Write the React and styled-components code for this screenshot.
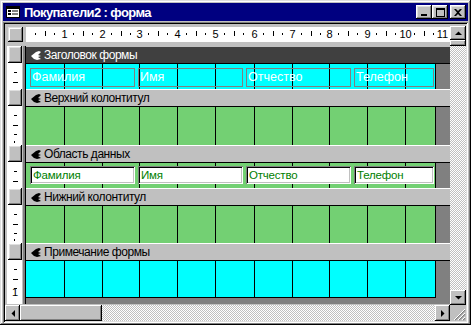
import React from 'react';
import styled, { createGlobalStyle } from 'styled-components';

const GREEN = '#73d073';
const CYAN = '#00ffff';
const GRID = [38, 76, 113, 151, 189, 228, 266, 303, 341, 379, 416];
const CM = 9.45;

const gridBg = GRID.slice(0, 10)
  .map((x) => `linear-gradient(#000, #000) ${x}px 0 / 1px 100% no-repeat`)
  .join(', ');

const Global = createGlobalStyle`
  html, body { margin: 0; padding: 0; background: #c0c0c0; }
  body { font-family: "Liberation Sans", Arial, sans-serif; }
`;

const bevelOut = 'inset -1px -1px #000, inset 1px 1px #dfdfdf, inset -2px -2px #808080, inset 2px 2px #fff';
const bevelBtn = 'inset -1px -1px #000, inset 1px 1px #fff, inset -2px -2px #808080';

const Window = styled.div`
  width: 471px;
  height: 325px;
  box-sizing: border-box;
  padding: 3px 3px 2px 3px;
  background: #c0c0c0;
  display: flex;
  flex-direction: column;
  box-shadow: ${bevelOut};
`;

const TitleBar = styled.div`
  height: 18px;
  background: #000080;
  display: flex;
  align-items: center;
  padding: 0 2px 0 3px;
`;

const TitleText = styled.span`
  margin-left: 4px;
  color: #fff;
  font-weight: bold;
  font-size: 13px;
  letter-spacing: -0.6px;
  white-space: nowrap;
`;

const TitleButtons = styled.div`
  margin-left: auto;
  display: flex;
`;

const TitleButton = styled.div`
  width: 16px;
  height: 14px;
  background: #c0c0c0;
  box-shadow: ${bevelBtn}, inset 2px 2px #dfdfdf;
  margin-left: ${(p) => p.$gap || 0}px;
  display: flex;
  align-items: center;
  justify-content: center;
`;

const Client = styled.div`
  margin-top: 1px;
  flex: 1;
  min-height: 0;
  padding: 2px;
  box-shadow: inset 1px 1px #808080, inset -1px -1px #fff, inset 2px 2px #000, inset -2px -2px #dfdfdf;
  display: grid;
  grid-template-columns: 1fr 16px;
  grid-template-rows: 1fr 16px;
`;

const Designer = styled.div`
  padding-top: 3px;
  display: grid;
  grid-template-columns: 21px 424px;
  grid-template-rows: 15px 258px;
  row-gap: 4px;
`;

const Corner = styled.div`
  margin-left: 3px;
  width: 15px;
  height: 15px;
  background: #c0c0c0;
  box-shadow: ${bevelOut};
`;

const HRuler = styled.div`
  width: 424px;
  height: 15px;
  background: #fff;
  display: flex;
`;

const VRuler = styled.div`
  margin-left: 2px;
  width: 15px;
  background: #fff;
  display: flex;
  flex-direction: column;
`;

const RulerButton = styled.div`
  height: 17px;
  margin-left: 1px;
  flex: none;
  background: #c0c0c0;
  box-shadow: ${bevelBtn}, inset 2px 2px #dfdfdf;
`;

const RulerSeg = styled.div`
  height: ${(p) => p.$h}px;
  flex: none;
  display: flex;
`;

const FormPane = styled.div`
  display: flex;
  flex-direction: column;
  box-shadow: -1px 0 0 0 #000, -3px 0 0 0 #808080;
`;

const SectionHeader = styled.div`
  height: 17px;
  box-sizing: border-box;
  border-top: 1px solid ${(p) => (p.$active ? '#c0c0c0' : '#fff')};
  background: ${(p) => (p.$active ? '#404040' : '#c0c0c0')};
  color: ${(p) => (p.$active ? '#fff' : '#000')};
  display: flex;
  align-items: center;
  padding-left: 5px;
  gap: 3px;
  font-size: 12px;
  letter-spacing: -0.45px;
  white-space: nowrap;
  flex: none;
`;

const SectionRow = styled.div`
  height: ${(p) => p.$h}px;
  display: flex;
  flex: none;
`;

const SectionBody = styled.div`
  width: 410px;
  flex: none;
  box-sizing: border-box;
  background: ${gridBg};
  background-color: ${(p) => p.$bg};
  box-shadow: inset 0 1px #000, inset -1px 0 #000${(p) => (p.$last ? ', inset 0 -1px #000' : '')};
  display: flex;
  align-items: flex-start;
  gap: 3px;
  padding: ${(p) => p.$pt || 0}px 0 0 4px;
`;

const SectionMargin = styled.div`
  flex: 1;
  background: #808080;
  box-shadow: inset 0 1px #000;
`;

const BottomStrip = styled.div`
  height: 6px;
  background: #808080;
  flex: none;
`;

const Label = styled.div`
  width: ${(p) => p.$w}px;
  height: 19px;
  box-sizing: border-box;
  border: 1px solid #808080;
  color: #fff;
  font-size: 12.5px;
  line-height: 17px;
  padding-left: 1px;
  white-space: nowrap;
  overflow: hidden;
`;

const Field = styled.div`
  width: ${(p) => p.$w}px;
  height: 18px;
  box-sizing: border-box;
  background: #fff;
  color: #008000;
  font-size: 11.5px;
  letter-spacing: -0.2px;
  line-height: 18px;
  padding-left: 3px;
  white-space: nowrap;
  overflow: hidden;
  box-shadow: inset 1px 1px #808080, inset -1px -1px #fff, inset 2px 2px #000, inset -2px -2px #c0c0c0;
`;

const checker = `
  background-color: #fff;
  background-image: repeating-conic-gradient(#c0c0c0 0 25%, #fff 0 50%);
  background-size: 2px 2px;
`;

const VScroll = styled.div`
  grid-column: 2;
  grid-row: 1;
  padding-top: 2px;
  display: flex;
  flex-direction: column;
`;

const HScroll = styled.div`
  grid-column: 1;
  grid-row: 2;
  display: flex;
`;

const ScrollButton = styled.div`
  flex: none;
  width: ${(p) => p.$w}px;
  height: ${(p) => p.$h}px;
  background: #c0c0c0;
  box-shadow: ${bevelBtn};
  display: flex;
  align-items: center;
  justify-content: center;
`;

const Track = styled.div`
  flex: 1;
  ${checker}
`;

const Grip = styled.div`
  grid-column: 2;
  grid-row: 2;
  background: #c0c0c0;
  display: flex;
  align-items: flex-end;
  justify-content: flex-end;
`;

const FIELDS = [
  ['Фамилия', 105],
  ['Имя', 105],
  ['Отчество', 105],
  ['Телефон', 80],
];

const SECTIONS = [
  { title: 'Заголовок формы', active: true, h: 26, bg: CYAN, kind: 'labels', pt: 5 },
  { title: 'Верхний колонтитул', h: 39, bg: GREEN },
  { title: 'Область данных', h: 26, bg: GREEN, kind: 'fields', pt: 4 },
  { title: 'Нижний колонтитул', h: 38, bg: GREEN },
  { title: 'Примечание формы', h: 38, bg: CYAN, last: true, one: true },
];

function FormIcon() {
  return (
    <svg width="14" height="12" viewBox="0 0 14 12">
      <rect x="0.5" y="0.5" width="13" height="11" fill="#fff" stroke="#000" />
      <rect x="1" y="1" width="12" height="2" fill="#000" />
      <rect x="2" y="4" width="3" height="2" fill="#000" />
      <rect x="6" y="4" width="6" height="2" fill="#808080" />
      <rect x="2" y="7" width="3" height="2" fill="#000" />
      <rect x="6" y="7" width="6" height="2" fill="#808080" />
    </svg>
  );
}

function HeaderIcon({ color }) {
  return (
    <svg width="10" height="9" viewBox="0 0 10 9">
      <path d="M0 5 L5 1 L8 0 L10 1 L7 4 L10 5 L7 6 L10 8 L6 9 L3 8 Z" fill={color} />
    </svg>
  );
}

function MinGlyph() {
  return (
    <svg width="8" height="8" viewBox="0 0 8 8">
      <rect x="1" y="6" width="6" height="2" fill="#000" />
    </svg>
  );
}

function MaxGlyph() {
  return (
    <svg width="9" height="9" viewBox="0 0 9 9">
      <rect x="0.5" y="0.5" width="8" height="8" fill="none" stroke="#000" />
      <rect x="0" y="1" width="9" height="1" fill="#000" />
    </svg>
  );
}

function CloseGlyph() {
  return (
    <svg width="8" height="7" viewBox="0 0 8 7">
      <path d="M0 0 H2 L4 2 L6 0 H8 L5 3.5 L8 7 H6 L4 5 L2 7 H0 L3 3.5 Z" fill="#000" />
    </svg>
  );
}

function Arrow({ dir }) {
  const paths = {
    up: 'M0 4 L3.5 0.5 L7 4 Z',
    down: 'M0 0 L7 0 L3.5 3.5 Z',
    left: 'M4 0 L4 7 L0.5 3.5 Z',
    right: 'M0 0 L0 7 L3.5 3.5 Z',
  };
  const vertical = dir === 'up' || dir === 'down';
  return (
    <svg width={vertical ? 7 : 4} height={vertical ? 4 : 7} viewBox={vertical ? '0 0 7 4' : '0 0 4 7'}>
      <path d={paths[dir]} fill="#000" />
    </svg>
  );
}

function HRulerMarks() {
  const marks = [];
  for (let k = 1; k * CM < 424; k++) {
    const n = Math.floor(k / 4);
    const base = n === 0 ? 0 : GRID[n - 1];
    const r = k % 4;
    if (r === 0) {
      marks.push(
        <text key={k} x={GRID[n - 1] + 0.5} y="11" fontSize="11" textAnchor="middle" fontFamily="Liberation Sans, Arial, sans-serif" fill="#000">
          {n}
        </text>
      );
    } else {
      const x = base + Math.round(r * CM);
      marks.push(
        r === 2 ? (
          <rect key={k} x={x} y="4" width="1" height="5" fill="#000" />
        ) : (
          <rect key={k} x={x} y="6" width="1" height="2" fill="#000" />
        )
      );
    }
  }
  return (
    <svg width="424" height="15" viewBox="0 0 424 15">
      {marks}
    </svg>
  );
}

function VRulerMarks({ h, one }) {
  const marks = [];
  for (let k = 1; k <= 4; k++) {
    const y = Math.round(k * CM);
    if (k === 4) {
      if (h < 37) break;
      if (one) {
        marks.push(
          <text key={k} x="8" y={h - 2} fontSize="11" textAnchor="middle" fontFamily="Liberation Sans, Arial, sans-serif" fill="#000">
            1
          </text>
        );
      } else {
        marks.push(<rect key={k} x="7" y={h - 4} width="1" height="2" fill="#000" />);
      }
    } else if (y < h) {
      marks.push(
        k === 2 ? (
          <rect key={k} x="6" y={y} width="5" height="1" fill="#000" />
        ) : (
          <rect key={k} x="7" y={y} width="3" height="1" fill="#000" />
        )
      );
    }
  }
  return (
    <svg width="15" height={h} viewBox={`0 0 15 ${h}`}>
      {marks}
    </svg>
  );
}

function SectionContent({ kind }) {
  if (kind === 'labels') {
    return FIELDS.map(([t, w]) => (
      <Label key={t} $w={w}>
        {t}
      </Label>
    ));
  }
  if (kind === 'fields') {
    return FIELDS.map(([t, w]) => (
      <Field key={t} $w={w}>
        {t}
      </Field>
    ));
  }
  return null;
}

export default function App() {
  return (
    <>
      <Global />
      <Window>
        <TitleBar>
          <FormIcon />
          <TitleText>Покупатели2 : форма</TitleText>
          <TitleButtons>
            <TitleButton>
              <MinGlyph />
            </TitleButton>
            <TitleButton>
              <MaxGlyph />
            </TitleButton>
            <TitleButton $gap={2}>
              <CloseGlyph />
            </TitleButton>
          </TitleButtons>
        </TitleBar>
        <Client>
          <Designer>
            <Corner />
            <HRuler>
              <HRulerMarks />
            </HRuler>
            <VRuler>
              {SECTIONS.map((s) => (
                <React.Fragment key={s.title}>
                  <RulerButton />
                  <RulerSeg $h={s.h}>
                    <VRulerMarks h={s.h} one={s.one} />
                  </RulerSeg>
                </React.Fragment>
              ))}
            </VRuler>
            <FormPane>
              {SECTIONS.map((s) => (
                <React.Fragment key={s.title}>
                  <SectionHeader $active={s.active}>
                    <HeaderIcon color={s.active ? '#fff' : '#000'} />
                    {s.title}
                  </SectionHeader>
                  <SectionRow $h={s.h}>
                    <SectionBody $bg={s.bg} $pt={s.pt} $last={s.last}>
                      <SectionContent kind={s.kind} />
                    </SectionBody>
                    <SectionMargin />
                  </SectionRow>
                </React.Fragment>
              ))}
              <BottomStrip />
            </FormPane>
          </Designer>
          <VScroll>
            <ScrollButton $w={16} $h={14}>
              <Arrow dir="up" />
            </ScrollButton>
            <ScrollButton $w={16} $h={6} />
            <Track />
            <ScrollButton $w={16} $h={15}>
              <Arrow dir="down" />
            </ScrollButton>
          </VScroll>
          <HScroll>
            <ScrollButton $w={15} $h={16}>
              <Arrow dir="left" />
            </ScrollButton>
            <ScrollButton $w={82} $h={16} />
            <Track />
            <ScrollButton $w={15} $h={16}>
              <Arrow dir="right" />
            </ScrollButton>
          </HScroll>
          <Grip>
            <svg width="12" height="12" viewBox="0 0 12 12">
              <path d="M11 1 L1 11 M11 5 L5 11 M11 9 L9 11" stroke="#808080" strokeWidth="1.2" />
              <path d="M11 0 L0 11 M11 4 L4 11 M11 8 L8 11" stroke="#fff" strokeWidth="1" />
            </svg>
          </Grip>
        </Client>
      </Window>
    </>
  );
}
